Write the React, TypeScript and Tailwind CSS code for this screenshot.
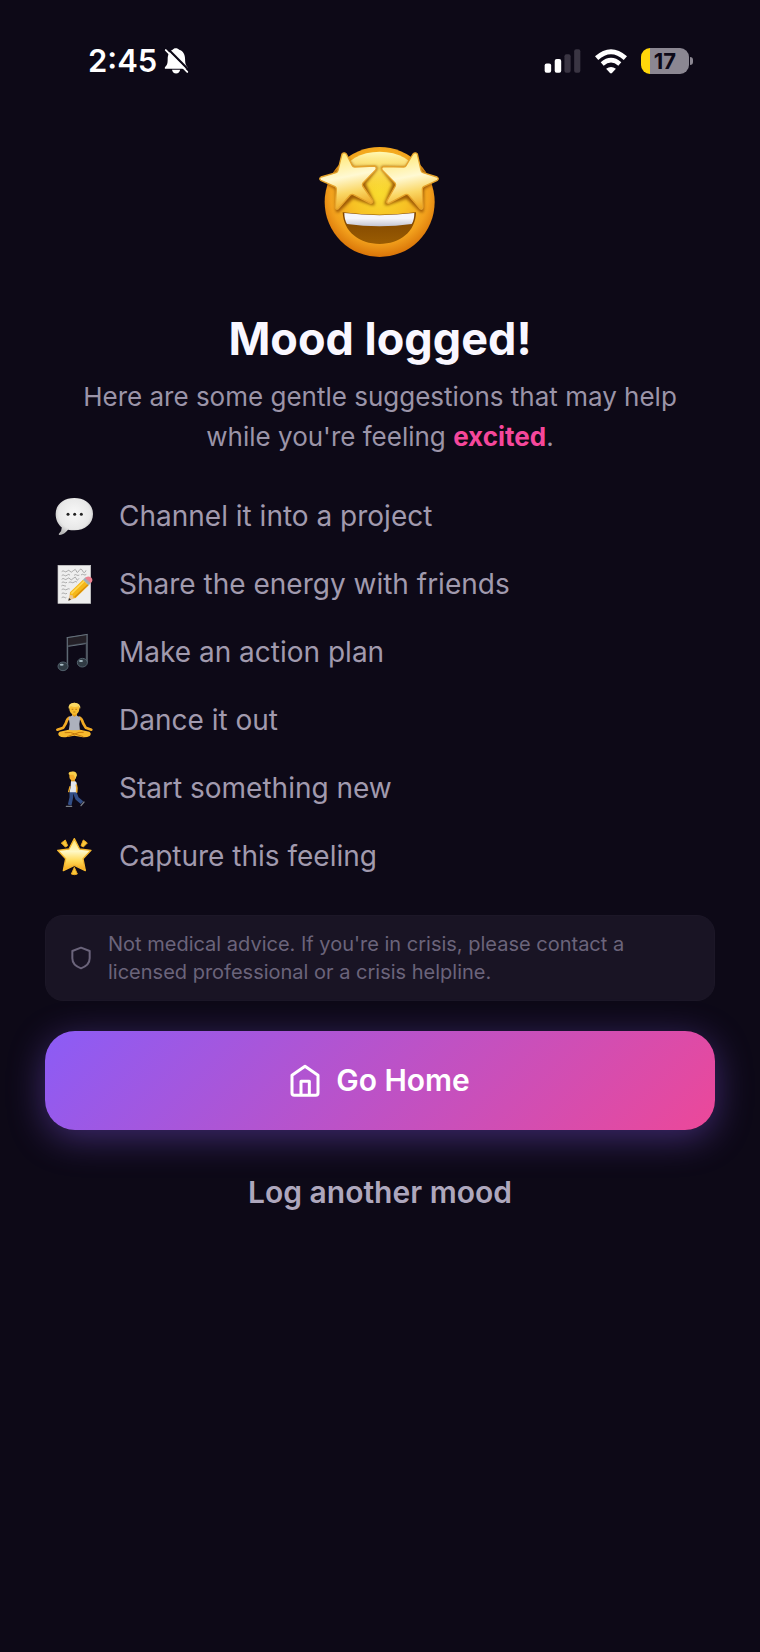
import { ReactNode } from "react";

type SuggestionProps = {
    icon: ReactNode;
    text: string;
}

const STAR = "M0 -49 L16 -18 L50 -14 L26 11 L33 47 L0 31 L-33 47 L-26 11 L-50 -14 L-16 -18 Z";

const BellOffIcon = () => (
    <svg className="h-7 w-7" viewBox="282 50 84 90" aria-hidden="true">
        <path d="M320 54c5 0 9 2 11 5c13 4 19 16 19 30c0 16 3 20 9 26v5h-74v-5c7-7 9-11 9-26c0-14 6-26 16-30c2-3 5-5 10-5z" fill="#fff" />
        <path d="M308 123h26c-1 7-6 12-13 12s-12-5-13-12z" fill="#fff" />
        <path d="M292 53l70 71" stroke="#0d0917" strokeWidth="7" />
        <path d="M288 60l69 70" stroke="#fff" strokeWidth="6" strokeLinecap="round" />
    </svg>
)

const SignalIcon = () => (
    <svg className="h-6 w-[37px]" viewBox="44 56 112 74" aria-hidden="true">
        <rect x="45" y="101" width="20" height="28" rx="6" fill="#fff" />
        <rect x="76" y="87" width="20" height="42" rx="6" fill="#fff" />
        <rect x="106" y="72" width="19" height="57" rx="6" fill="#3a3543" />
        <rect x="136" y="57" width="19" height="72" rx="6" fill="#3a3543" />
    </svg>
)

const WifiIcon = () => (
    <svg className="h-[25px] w-8" viewBox="196 55 98 75" aria-hidden="true">
        <path d="M201 82Q245 43 289 82" fill="none" stroke="#fff" strokeWidth="15" />
        <path d="M218 100Q245 77 272 100" fill="none" stroke="#fff" strokeWidth="14" />
        <path d="M230 115Q245 103 260 115L248 128Q245 131 242 128Z" fill="#fff" />
    </svg>
)

const ExcitedFace = () => (
    <svg className="h-[130px] w-[140px]" viewBox="0 0 420 390" role="img" aria-label="Excited">
        <defs>
            <radialGradient id="face" cx="0.5" cy="0.42" r="0.58">
                <stop offset="0" stopColor="#f9dc2e" />
                <stop offset="0.45" stopColor="#f7c124" />
                <stop offset="0.78" stopColor="#f2a01c" />
                <stop offset="1" stopColor="#d97408" />
            </radialGradient>
            <linearGradient id="shine" x1="0" y1="0" x2="0" y2="1">
                <stop offset="0" stopColor="#fff9b5" />
                <stop offset="1" stopColor="#fbe04a" stopOpacity="0" />
            </linearGradient>
            <linearGradient id="star" x1="0.4" y1="0" x2="0.6" y2="1">
                <stop offset="0" stopColor="#ffe873" />
                <stop offset="0.42" stopColor="#fff9d3" />
                <stop offset="0.7" stopColor="#fad663" />
                <stop offset="1" stopColor="#eda31c" />
            </linearGradient>
            <linearGradient id="mouth" x1="0" y1="0" x2="0" y2="1">
                <stop offset="0" stopColor="#7c4300" />
                <stop offset="1" stopColor="#9a5c02" />
            </linearGradient>
            <linearGradient id="teeth" x1="0" y1="0" x2="0" y2="1">
                <stop offset="0.4" stopColor="#f6f6fa" />
                <stop offset="1" stopColor="#c4c5d2" />
            </linearGradient>
            <filter id="soft" x="-20%" y="-20%" width="140%" height="140%">
                <feGaussianBlur stdDeviation="4" />
            </filter>
            <clipPath id="head">
                <circle cx="209" cy="201" r="165" />
            </clipPath>
        </defs>
        <circle cx="209" cy="201" r="165" fill="url(#face)" />
        <ellipse cx="209" cy="112" rx="105" ry="62" fill="url(#shine)" />
        <path d="M98 232Q209 246 318 232C317 290 270 327 209 327S100 290 98 232Z" fill="url(#mouth)" />
        <path d="M103 234Q209 247 313 234Q313 256 305 267Q209 281 111 267Q103 254 103 234Z" fill="url(#teeth)" />
        <g clipPath="url(#head)">
            <g filter="url(#soft)" opacity="0.85" fill="#8f4a03" stroke="#8f4a03" strokeWidth="12" strokeLinejoin="round">
                <path d="M103 63L128 101L197 99L160 146L188 205L128 184L83 226L82 159L34 131L87 109Z" />
                <path d="M315 63L290 101L219 99L254 146L230 205L290 184L335 226L336 159L384 131L331 109Z" />
            </g>
        </g>
        <g fill="url(#star)" stroke="#e5a32b" strokeWidth="4" strokeLinejoin="round">
            <path d="M96 57Q102 50 109 57L127 92Q129 96 134 96L193 93Q202 96 197 105L159 144Q156 148 158 153L188 197Q189 206 181 205L130 179Q126 177 121 180L84 222Q77 225 76 216L79 162Q79 157 75 155L32 136Q26 130 33 126L78 113Q83 111 84 106Z" />
            <path d="M322 57Q316 50 309 57L288 92Q286 96 281 96L221 95Q212 98 217 106L255 144Q258 148 256 153L231 197Q228 206 237 205L286 179Q291 177 295 180L331 222Q338 225 339 216L337 162Q337 157 341 155L382 136Q388 130 381 126L339 113Q334 111 333 106Z" />
        </g>
    </svg>
)

const SpeechIcon = () => (
    <svg className="size-10 shrink-0" viewBox="40 48 120 120" aria-hidden="true">
        <defs>
            <radialGradient id="bubble" cx="0.5" cy="0.42" r="0.6">
                <stop offset="0" stopColor="#f8f8f8" />
                <stop offset="0.7" stopColor="#e8e8e8" />
                <stop offset="1" stopColor="#b6b6b6" />
            </radialGradient>
        </defs>
        <path d="M101 54C133 54 157 73 157 102S133 151 101 151Q91 151 82 149Q71 163 57 165Q52 164 56 160Q64 152 63 142C52 133 45 119 45 102C45 73 69 54 101 54Z" fill="url(#bubble)" />
        <circle cx="82" cy="103" r="4.500" fill="#222" />
        <circle cx="102" cy="103" r="4.500" fill="#222" />
        <circle cx="122" cy="103" r="4.500" fill="#222" />
    </svg>
)

const MemoIcon = () => (
    <svg className="size-10 shrink-0" viewBox="40 252 120 120" aria-hidden="true">
        <rect x="52" y="256" width="98" height="114" fill="#eeeeee" stroke="#c9c9c9" strokeWidth="2" />
        <g fill="none" stroke="#8a8a8a" strokeWidth="2">
            <path d="M63 275q4-5 8-1t9-1t8 1t10-2t9 1t8-1t11 1t10-2" />
            <path d="M63 287q4-5 8-1t9-1t8 1M100 286q4-4 8-1t8 0M121 285q4-4 8-1t8-1" />
            <path d="M63 298q4-5 8-1t9-1t8 1t10-2t9 1t8-1" />
            <path d="M63 308q4-4 8-1t8 0M84 308q4-4 8-1t9-1t8 1" />
            <path d="M62 318q4-4 8-1t6 0" />
            <path d="M63 329q4-4 8-1t8 0t8-1" />
            <path d="M63 341q4-4 8-1t8 0" />
            <path d="M63 353q4-4 8-1t6 0" />
        </g>
        <path d="M83 362L88 336L105 354Z" fill="#e9c490" />
        <path d="M83 362L85 354L91 359Z" fill="#333" />
        <path d="M88 337L127 299L144 316L105 354L98 354L96 346L88 345Z" fill="#f5b719" />
        <path d="M92 341L131 303" stroke="#ffd956" strokeWidth="5" />
        <path d="M102 352L142 314" stroke="#d98f0b" strokeWidth="4" />
        <path d="M127 299L134 292L151 309L144 316Z" fill="#9faeb8" />
        <path d="M133 294Q140 286 151 292Q160 301 150 310Z" fill="#ed8291" />
    </svg>
)

const MusicIcon = () => (
    <svg className="size-10 shrink-0" viewBox="40 456 120 120" aria-hidden="true">
        <path d="M78 472L141 462V548H135V491L83 499V560H78Z" fill="#3a3f48" />
        <path d="M81 475L139 465V487L81 496Z" fill="#231f26" />
        <path d="M78 473L141 463M83 499L135 491M80 474V558M139 464V548" stroke="#66717c" strokeWidth="3" />
        <ellipse cx="67" cy="559" rx="15" ry="13" fill="#303b44" stroke="#51606b" strokeWidth="3" />
        <ellipse cx="125" cy="548" rx="15" ry="13" fill="#303b44" stroke="#51606b" strokeWidth="3" />
        <ellipse cx="63" cy="554" rx="6" ry="3" fill="#a9bdc6" />
        <ellipse cx="121" cy="543" rx="6" ry="3" fill="#a9bdc6" />
    </svg>
)

const LotusIcon = () => (
    <svg className="size-10 shrink-0" viewBox="40 60 120 120" aria-hidden="true">
        <path d="M86 113Q79 117 76 129L68 143L50 149M117 113Q124 117 127 129L135 143L152 149" fill="none" stroke="#f1aa24" strokeWidth="8" strokeLinecap="round" strokeLinejoin="round" />
        <path d="M94 98H109V115H94Z" fill="#e19a18" />
        <path d="M84 112Q93 108 96 106Q101 114 107 106Q111 109 119 112L116 132L118 154H84L87 132Z" fill="#adb1bd" />
        <path d="M84 149Q101 153 119 149L146 155Q154 161 147 168Q138 173 122 171L101 167L79 171Q63 174 55 167Q50 160 57 155Z" fill="#f7b92d" />
        <path d="M72 158Q91 155 103 162L128 170M129 157Q115 155 102 162L79 170" stroke="#c67b0d" strokeWidth="3" fill="none" />
        <ellipse cx="101" cy="86" rx="15" ry="18" fill="#f8bd30" />
        <path d="M85 88Q80 68 101 68T118 88L114 79Q102 83 90 78Z" fill="#fbda63" />
        <path d="M93 88h5M104 88h5M98 96h6" stroke="#9c6108" strokeWidth="2" />
    </svg>
)

const WalkIcon = () => (
    <svg className="size-10 shrink-0" viewBox="40 264 120 120" aria-hidden="true">
        <path d="M92 334L92 352L87 375M101 334L109 355L124 368" fill="none" stroke="#324e86" strokeWidth="11" strokeLinejoin="round" />
        <path d="M77 379H93M121 377L130 366" stroke="#777c85" strokeWidth="4" strokeLinecap="round" />
        <path d="M91 303Q102 299 108 308L109 337H87L90 318Z" fill="#e3e7ed" />
        <path d="M107 315Q110 323 108 336" fill="none" stroke="#eeab2c" strokeWidth="5" strokeLinecap="round" />
        <path d="M88 320L84 335" stroke="#eeab2c" strokeWidth="4" strokeLinecap="round" />
        <path d="M91 294H103V304H91Z" fill="#d58f17" />
        <ellipse cx="96" cy="288" rx="10" ry="13" fill="#f3ad2b" />
        <path d="M85 284Q81 276 91 275Q108 271 109 286L104 297Q102 288 98 284Z" fill="#f8cf4b" />
    </svg>
)

const GlowStarIcon = () => (
    <svg className="size-10 shrink-0" viewBox="40 468 120 120" aria-hidden="true">
        <defs>
            <linearGradient id="glow" x1="0" y1="0" x2="0" y2="1">
                <stop offset="0" stopColor="#ffe56d" />
                <stop offset="0.4" stopColor="#fff8c5" />
                <stop offset="0.7" stopColor="#ffd956" />
                <stop offset="1" stopColor="#f5a317" />
            </linearGradient>
        </defs>
        <path d={STAR} transform="translate(101 525)" fill="url(#glow)" stroke="#f5b72d" strokeWidth="4" strokeLinejoin="round" />
        <g fill="#f8c83c" stroke="#f0a91f" strokeWidth="3" strokeLinejoin="round">
            <path d="M74 480L81 497L74 501L62 489Z" />
            <path d="M128 480L121 497L128 501L140 489Z" />
            <path d="M101 562L110 582Q101 586 92 582Z" />
        </g>
    </svg>
)

const ShieldIcon = () => (
    <svg className="h-6 w-5 shrink-0" viewBox="122 141 60 72" fill="none" stroke="#6b647b" strokeWidth="6" strokeLinejoin="round" aria-hidden="true">
        <path d="M152 146L178 156V178Q178 199 152 208Q126 199 126 178V156Z" />
    </svg>
)

const HomeIcon = () => (
    <svg className="h-[34px] w-[30px]" viewBox="784 493 90 102" fill="none" stroke="#fff" strokeWidth="9" strokeLinejoin="round" aria-hidden="true">
        <path d="M829 500L868 527V580Q868 587 861 587H797Q790 587 790 580V527Z" />
        <path d="M817 587V545H842V587" />
    </svg>
)

const suggestions: SuggestionProps[] = [
    { icon: <SpeechIcon />, text: "Channel it into a project" },
    { icon: <MemoIcon />, text: "Share the energy with friends" },
    { icon: <MusicIcon />, text: "Make an action plan" },
    { icon: <LotusIcon />, text: "Dance it out" },
    { icon: <WalkIcon />, text: "Start something new" },
    { icon: <GlowStarIcon />, text: "Capture this feeling" },
]

const Suggestion = ({ icon, text }: SuggestionProps) => (
    <li className="flex h-[68px] items-center gap-[25px] pl-[9px]">
        {icon}
        <span className="text-[28px] leading-9 text-[#a19aae]">{text}</span>
    </li>
)

const StatusBar = () => (
    <header className="flex items-center justify-between pt-[41px] pr-[67px] pl-[88px] text-white">
        <div className="flex items-center gap-1.5">
            <span className="text-[31px] leading-10 font-semibold">2:45</span>
            <BellOffIcon />
        </div>
        <div className="flex items-center gap-3.5">
            <SignalIcon />
            <WifiIcon />
            <div className="flex items-center gap-px">
                <div className="flex h-[26px] w-12 items-center justify-center rounded-[9px] bg-linear-to-r from-[#ffd60a] from-[19%] to-[#8b8792] to-[19%] text-[22px] leading-[26px] font-bold text-[#0d0917]">
                    17
                </div>
                <div className="h-2 w-[3px] rounded-r-full bg-[#8b8792]" />
            </div>
        </div>
    </header>
)

export default function App() {
    return (
        <div className="min-h-screen bg-[#0d0917] font-['Inter',sans-serif]">
            <StatusBar />
            <main className="flex flex-col px-[45px] pt-[54px]">
                <div className="flex justify-center">
                    <ExcitedFace />
                </div>
                <h1 className="mt-11 text-center text-[45px] leading-[60px] font-bold text-[#f9f7ff]">Mood logged!</h1>
                <p className="mt-2 px-4 text-center text-[26px] leading-10 text-[#9b94a8]">
                    Here are some gentle suggestions that may help while you're feeling{" "}
                    <strong className="font-bold text-[#f5479b]">excited</strong>.
                </p>
                <ul className="mt-[25px]">
                    {suggestions.map((item) => (
                        <Suggestion key={item.text} {...item} />
                    ))}
                </ul>
                <aside className="mt-[25px] flex items-center gap-[17px] rounded-[18px] border border-[#1c1727] bg-[#191424] px-[25px] py-[14px]">
                    <ShieldIcon />
                    <p className="text-[20px] leading-7 text-[#6b647b]">
                        Not medical advice. If you're in crisis, please contact a licensed professional or a crisis helpline.
                    </p>
                </aside>
                <button className="mt-[30px] flex h-[99px] items-center justify-center gap-4 rounded-[30px] bg-[linear-gradient(135deg,#8b5cf6,#ec4899)] text-[30px] font-semibold text-white shadow-[0_8px_36px_rgba(139,92,246,0.4)]">
                    <HomeIcon />
                    Go Home
                </button>
                <button className="mt-10 self-center text-[30px] leading-[44px] font-semibold text-[#aea7bd]">
                    Log another mood
                </button>
            </main>
        </div>
    )
}
